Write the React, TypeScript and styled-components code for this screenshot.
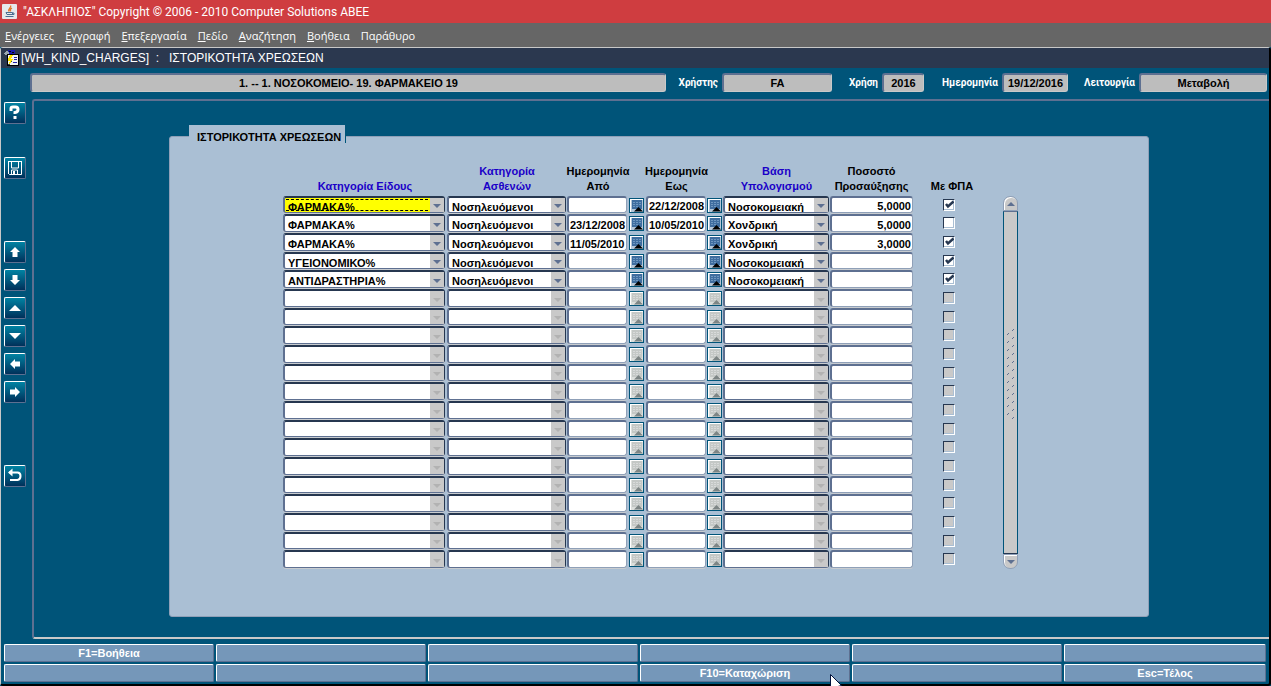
import React from "react";
import styled, { createGlobalStyle, css } from "styled-components";

const color = {
  teal: "#005479",
  panel: "#aabfd4",
  slate: "#5e7091",
  navy: "#263750",
  silver: "#c9c9c9",
  mist: "#8fa0b8",
  field: "#bdbdbd",
};

const GlobalStyle = createGlobalStyle`
  * { box-sizing: border-box; }
  body { margin: 0; background: ${color.teal}; overflow: hidden; }
  button, input, select { font: inherit; color: inherit; margin: 0; padding: 0; border-radius: 0; }
`;

const Shell = styled.div`
  min-height: 100vh;
  display: flex;
  flex-direction: column;
  font: bold 11px/15px "Liberation Sans", Arial, sans-serif;
  color: #000;
`;

const TitleBar = styled.header`
  display: flex;
  align-items: center;
  gap: 6px;
  height: 23px;
  padding-left: 2px;
  background: #cf3d40;
  color: #fff;
  font: 12px/16px Roboto, "Open Sans", sans-serif;
`;

const MenuBar = styled.nav`
  display: flex;
  align-items: center;
  gap: 11px;
  height: 24px;
  padding: 1px 0 0 5px;
  background: #666;
  color: #fff;
  font: 11px/16px "Open Sans", "Noto Sans", sans-serif;
`;

const MenuItem = styled.button`
  border: 0;
  background: none;
  white-space: nowrap;
`;

const Mdi = styled.main`
  flex: 1;
  display: flex;
  flex-direction: column;
  border: solid;
  border-width: 1px 2px 2px 1px;
  border-color: #c8c8c8 #000 #000 #c8c8c8;
  border-radius: 3px;
  background: ${color.teal};
`;

const MdiTitle = styled.h1`
  display: flex;
  align-items: center;
  gap: 2px;
  height: 20px;
  margin: 0;
  padding-left: 3px;
  background: #2b384f;
  color: #fff;
  font: 12px/16px "Liberation Sans", Arial, sans-serif;
  white-space: pre;
`;

const StatusBar = styled.div`
  display: grid;
  grid-template-columns: 1fr 56px 110px 50px 42px 78px 66px 71px 128px;
  align-items: center;
  padding: 5px 2px 0 29px;
`;

const StatusLabel = styled.label`
  padding-right: 4px;
  color: #fff;
  font-family: Roboto, "Liberation Sans", sans-serif;
  font-size: 10px;
  text-align: right;
  white-space: nowrap;
`;

const StatusField = styled.input`
  width: 100%;
  height: 19px;
  border: solid;
  border-width: 2px 1px 1px 2px;
  border-color: ${color.slate} ${color.silver} ${color.silver} ${color.slate};
  border-radius: 3px;
  background: ${color.field};
  text-align: center;
`;

const Workspace = styled.div`
  flex: 1;
  display: flex;
  margin-top: 7px;
`;

const ToolBar = styled.aside`
  flex: none;
  width: 31px;
  display: flex;
  flex-direction: column;
  gap: 33px;
  padding: 3px 0 0 3px;
`;

const ToolGroup = styled.div<{ $spaced?: boolean }>`
  display: flex;
  flex-direction: column;
  gap: 6px;
  margin-top: ${(p) => (p.$spaced ? 29 : 0)}px;
`;

const Tool = styled.button`
  display: flex;
  align-items: center;
  justify-content: center;
  width: 22px;
  height: 22px;
  border: 1px solid;
  border-color: #fff ${color.slate} ${color.slate} #fff;
  border-radius: 2px;
  background: linear-gradient(#0083a3, #00305a);
`;

const Frame = styled.div`
  flex: 1;
  border: solid;
  border-width: 2px 0 2px 2px;
  border-color: ${color.slate} transparent ${color.silver} ${color.slate};
  border-radius: 3px 0 0 3px;
  padding: 35px 120px 20px 135px;
  display: flex;
`;

const Panel = styled.section`
  position: relative;
  flex: 1;
  border: 1px solid ${color.mist};
  border-radius: 3px;
  background: ${color.panel};
  padding: 27px 0 47px 113px;
`;

const PanelTab = styled.h2`
  position: absolute;
  top: -12px;
  left: 19px;
  height: 18px;
  margin: 0;
  padding: 4px 4px 0 8px;
  border-right: 1px solid ${color.teal};
  background: ${color.panel};
  font: inherit;
  font-weight: bold;
  line-height: 17px;
`;

const Sheet = styled.form`
  display: flex;
  align-items: flex-end;
  gap: 12px;
`;

const Grid = styled.table`
  table-layout: fixed;
  width: 708px;
  border-collapse: collapse;
  td, th { padding: 0; }
`;

const HeadCell = styled.th<{ $lookup?: boolean }>`
  height: 32px;
  vertical-align: top;
  color: ${(p) => (p.$lookup ? "#1a00c8" : "#000")};
  span {
    display: flex;
    flex-direction: column;
    align-items: center;
    justify-content: flex-end;
    height: 30px;
    margin: 0 -8px;
    white-space: pre-line;
  }
`;

const Row = styled.tr`
  --cell: 18px;
  height: 19px;
  &:nth-child(3n + 1) {
    --cell: 17px;
    height: 18px;
  }
  td { vertical-align: top; line-height: 0; }
`;

const TextField = styled.input<{ $right?: boolean; $width: number }>`
  width: ${(p) => p.$width}px;
  height: var(--cell);
  padding: ${(p) => (p.$right ? "2px 1px 0 0" : "2px 0 0 1px")};
  border: solid;
  border-width: 2px 1px 1px 2px;
  border-color: ${color.slate} ${color.mist} ${color.mist} ${color.slate};
  border-radius: 3px;
  background: #fff;
  text-align: ${(p) => (p.$right ? "right" : "left")};
  box-shadow: 0 1px 0 #c8ccd0;
`;

const SelectBox = styled.div<{ $width: number }>`
  position: relative;
  width: ${(p) => p.$width}px;
  height: var(--cell);
`;

const Select = styled.select<{ $current?: boolean }>`
  appearance: none;
  width: 100%;
  height: 100%;
  padding: 2px 14px 0 3px;
  border: solid;
  border-width: 2px 1px 1px 2px;
  border-color: ${color.navy} ${color.navy} ${color.slate} ${color.slate};
  border-radius: 3px;
  background: #fff;
  box-shadow: 0 1px 0 #c8ccd0;
  line-height: 15px;
  outline: 0;
  ${(p) =>
    p.$current &&
    css`
      background: #ff0;
    `}
`;

const FocusRing = styled.i`
  position: absolute;
  inset: 3px 17px 2px 3px;
  border: dashed #000;
  border-width: 1px 0;
  pointer-events: none;
`;

const Arrow = styled.span<{ $off: boolean }>`
  position: absolute;
  top: 2px;
  right: 1px;
  bottom: 1px;
  width: 14px;
  display: flex;
  align-items: center;
  justify-content: center;
  padding-top: 2px;
  background: ${color.silver};
  color: ${(p) => (p.$off ? "#b2b2b2" : color.slate)};
  pointer-events: none;
`;

const DateButton = styled.button<{ $off: boolean }>`
  display: block;
  width: 15px;
  height: 15px;
  margin-top: 2px;
  border: 1px solid ${color.teal};
  background: ${(p) => (p.$off ? "#dcdfdc" : "#b4c6d8")};
  box-shadow: inset 1px 1px 0 #fff;
  svg { display: block; }
`;

const CheckCell = styled.td`
  && { padding-right: 7px; }
`;

const Tick = styled.label<{ $off: boolean }>`
  position: relative;
  display: block;
  width: 12px;
  height: 12px;
  margin: 3px auto 0;
  input {
    appearance: none;
    display: block;
    width: 12px;
    height: 12px;
    border: 1px solid;
    border-color: ${color.navy} #fff #fff ${color.navy};
    background: ${(p) => (p.$off ? color.silver : "#fff")};
    box-shadow: inset -1px -1px 0 ${color.panel};
  }
  svg {
    position: absolute;
    top: 1px;
    left: 2px;
    pointer-events: none;
  }
`;

const ScrollBar = styled.div`
  width: 15px;
  align-self: stretch;
  display: flex;
  flex-direction: column;
  margin-top: 32px;
`;

const ScrollButton = styled.button<{ $down?: boolean }>`
  display: flex;
  align-items: center;
  justify-content: center;
  height: 15px;
  border: 1px solid ${color.mist};
  border-radius: ${(p) => (p.$down ? "0 0 7px 7px" : "7px 7px 0 0")};
  background: ${color.silver};
  color: ${color.slate};
  box-shadow: inset 1px 1px 0 #fff;
`;

const Track = styled.div`
  flex: 1;
  display: flex;
  justify-content: center;
  border: 1px solid ${color.teal};
  border-color: ${color.slate} ${color.teal} ${color.navy};
  padding-top: 117px;
  background: ${color.silver};
`;

const KeyBar = styled.footer`
  display: grid;
  grid-template-columns: repeat(5, 105fr) 101fr;
  gap: 2px;
  padding: 5px 3px 2px;
`;

const KeyButton = styled.button`
  height: 18px;
  border: 1px solid;
  border-color: #fff ${color.slate} ${color.slate} #fff;
  border-radius: 2px;
  background: #7597b9;
  color: #fff;
`;

const Pointer = styled.svg`
  position: absolute;
  top: 674px;
  left: 830px;
`;

const JavaLogo = () => (
  <svg width="15" height="15" viewBox="0 0 15 15">
    <rect width="15" height="15" rx="1" fill="#e6e9ec" />
    <path d="M8.5 1.5C10 3.5 5.500 4.500 7 7.500M10 4C8 5 8 6 8.500 7.500" stroke="#e0782b" strokeWidth="1.300" fill="none" />
    <path d="M4 8.500h6.500v2H5zM3.500 12.500h8M10.500 9h1.500v1.500h-2" stroke="#4b6f91" fill="none" />
  </svg>
);

const FormLogo = () => (
  <svg width="15" height="16" viewBox="0 0 15 16" shapeRendering="crispEdges">
    <path d="M0 3l3-2 2 1v3H1z" fill="#9aa6b0" />
    <path d="M4 0h7v4H5z" fill="#1a1ab0" />
    <path d="M5 1h2v1H5zM8 2h2v1H8z" fill="#000" />
    <path d="M3 4h12v12H3z" fill="#000" />
    <path d="M4 5h10v10H4z" fill="#f4f4f4" />
    <path d="M10 7.500h3M10 9.500h3M9 12.500h4" stroke="#2424a8" />
    <path d="M8 5H6L4 9v2h2l-2 4h1l4-6H7l2-4z" fill="#ffe600" />
    <path d="M4 14.500h2M7 11.500h1" stroke="#444" fill="none" />
  </svg>
);

const toolShapes: Record<string, React.ReactNode> = {
  Βοήθεια: <path d="M5 7V4.500Q5 3 7 3h2.500Q12 3 12 5.500T9 8.500V10M9 12v3" stroke="#fff" strokeWidth="3" fill="none" />,
  Αποθήκευση: (
    <>
      <path d="M2.500 2.500h13v13h-12l-1-1zM5.500 3v6h7V3M5.500 15v-4h6v4M8 13v2" stroke="#fff" fill="none" />
      <path d="M2 2h1v13H2zM15 2h1v13h-1zM7 12h2v3H7z" fill="#fff" />
    </>
  ),
  Πρώτη: <path d="M9 4l5 5h-2.500v5h-5V9H4z" fill="#fff" />,
  Τελευταία: <path d="M9 14l5-5h-2.500V4h-5v5H4z" fill="#fff" />,
  Προηγούμενη: <path d="M9 6l6 6H3z" fill="#fff" />,
  Επόμενη: <path d="M9 12l6-6H3z" fill="#fff" />,
  Αριστερά: <path d="M4 9l5-5v2.500h5v5H9V14z" fill="#fff" />,
  Δεξιά: <path d="M14 9L9 4v2.500H4v5h5V14z" fill="#fff" />,
  Επιστροφή: (
    <>
      <path d="M3 5.500h8.500q3 0 3 3.500t-3 4H4" stroke="#fff" strokeWidth="2" fill="none" />
      <path d="M2 5.500L6.500 1.500v8z" fill="#fff" />
    </>
  ),
};

const ToolIcon = ({ name }: { name: string }) => (
  <Tool type="button" aria-label={name}>
    <svg width="18" height="18" viewBox="0 0 18 18">
      {toolShapes[name]}
    </svg>
  </Tool>
);

const Triangle = ({ up }: { up?: boolean }) => (
  <svg width="8" height="4" viewBox="0 0 8 4">
    <path d={up ? "M0 4h8L4 0z" : "M0 0h8L4 4z"} fill="currentColor" />
  </svg>
);

const Combo = ({ label, value, width, current }: { label: string; value?: string; width: number; current?: boolean }) => (
  <SelectBox $width={width}>
    <Select aria-label={label} defaultValue={value ?? ""} $current={current}>
      <option value={value ?? ""}>{value ?? ""}</option>
    </Select>
    {current && <FocusRing />}
    <Arrow $off={value === undefined}>
      <Triangle />
    </Arrow>
  </SelectBox>
);

const Calendar = ({ off }: { off: boolean }) => (
  <DateButton type="button" aria-label="Ημερολόγιο" $off={off}>
    <svg width="13" height="13" viewBox="0 0 13 13">
      <path d="M2 1h10v9H2z" fill={off ? "#c4c8c6" : "#3f6d9f"} />
      <path
        d="M3 3.500h2M6 3.500h2M9 3.500h2M3 5.500h2M6 5.500h2M9 5.500h2M3 7.500h2M6 7.500h2"
        stroke={off ? "#d8dada" : "#6f97c0"}
      />
      <path d="M4 12.500l4.500-4.500 4.500 4.500z" fill={off ? "#7d8585" : "#000"} />
    </svg>
  </DateButton>
);

type Charge = { kind: string; from?: string; to?: string; basis: string; pct?: string; vat: boolean };

const charges: Charge[] = [
  { kind: "ΦΑΡΜΑΚΑ%", to: "22/12/2008", basis: "Νοσοκομειακή", pct: "5,0000", vat: true },
  { kind: "ΦΑΡΜΑΚΑ%", from: "23/12/2008", to: "10/05/2010", basis: "Χονδρική", pct: "5,0000", vat: false },
  { kind: "ΦΑΡΜΑΚΑ%", from: "11/05/2010", basis: "Χονδρική", pct: "3,0000", vat: true },
  { kind: "ΥΓΕΙΟΝΟΜΙΚΟ%", basis: "Νοσοκομειακή", vat: true },
  { kind: "ΑΝΤΙΔΡΑΣΤΗΡΙΑ%", basis: "Νοσοκομειακή", vat: true },
];

const rows: (Charge | undefined)[] = Array.from({ length: 20 }, (_, i) => charges[i]);

const columns = [164, 120, 62, 17, 61, 16, 107, 83, 78];

const menus = ["Ενέργειες", "Εγγραφή", "Επεξεργασία", "Πεδίο", "Αναζήτηση", "Βοήθεια"];

const status = [
  ["Χρήστης", "FA"],
  ["Χρήση", "2016"],
  ["Ημερομηνία", "19/12/2016"],
  ["Λειτουργία", "Μεταβολή"],
];

const keys = ["F1=Βοήθεια", "", "", "", "", "", "", "", "", "F10=Καταχώριση", "", "Esc=Τέλος"];

const Head = ({ text, lookup }: { text: string; lookup?: boolean }) => (
  <HeadCell scope="col" $lookup={lookup}>
    <span>{text}</span>
  </HeadCell>
);

const ChargeRow = ({ charge, current }: { charge?: Charge; current: boolean }) => {
  const off = !charge;
  return (
    <Row>
      <td>
        <Combo label="Κατηγορία Είδους" width={162} value={charge?.kind} current={current} />
      </td>
      <td>
        <Combo label="Κατηγορία Ασθενών" width={119} value={charge && "Νοσηλευόμενοι"} />
      </td>
      <td>
        <TextField aria-label="Ημερομηνία Από" $width={60} defaultValue={charge?.from} />
      </td>
      <td>
        <Calendar off={off} />
      </td>
      <td>
        <TextField aria-label="Ημερομηνία Εως" $width={60} defaultValue={charge?.to} />
      </td>
      <td>
        <Calendar off={off} />
      </td>
      <td>
        <Combo label="Βάση Υπολογισμού" width={106} value={charge?.basis} />
      </td>
      <td>
        <TextField aria-label="Ποσοστό Προσαύξησης" $width={83} $right defaultValue={charge?.pct} />
      </td>
      <CheckCell>
        <Tick $off={off}>
          <input type="checkbox" aria-label="Με ΦΠΑ" disabled={off} defaultChecked={charge?.vat} />
          {charge?.vat && (
            <svg width="9" height="9" viewBox="0 0 9 9">
              <path d="M1 4l2 2.500L8.500 1.500" stroke={color.navy} strokeWidth="2.500" fill="none" />
            </svg>
          )}
        </Tick>
      </CheckCell>
    </Row>
  );
};

export default function App() {
  return (
    <Shell>
      <GlobalStyle />
      <TitleBar>
        <JavaLogo />
        <span>"ΑΣΚΛΗΠΙΟΣ" Copyright © 2006 - 2010 Computer Solutions ABEE</span>
      </TitleBar>
      <MenuBar>
        {menus.map((m) => (
          <MenuItem key={m}>
            <u>{m[0]}</u>
            {m.slice(1)}
          </MenuItem>
        ))}
        <MenuItem>Παράθυρο</MenuItem>
      </MenuBar>
      <Mdi>
        <MdiTitle>
          <FormLogo />
          {"[WH_KIND_CHARGES]  :   ΙΣΤΟΡΙΚΟΤΗΤΑ ΧΡΕΩΣΕΩΝ"}
        </MdiTitle>
        <StatusBar>
          <StatusField aria-label="Μονάδα" readOnly value="1. -- 1. ΝΟΣΟΚΟΜΕΙΟ- 19. ΦΑΡΜΑΚΕΙΟ 19" />
          {status.map(([label, value]) => (
            <React.Fragment key={label}>
              <StatusLabel htmlFor={label}>{label}</StatusLabel>
              <StatusField id={label} readOnly value={value} />
            </React.Fragment>
          ))}
        </StatusBar>
        <Workspace>
          <ToolBar>
            <ToolIcon name="Βοήθεια" />
            <ToolIcon name="Αποθήκευση" />
            <ToolGroup $spaced>
              {["Πρώτη", "Τελευταία", "Προηγούμενη", "Επόμενη", "Αριστερά", "Δεξιά"].map((n) => (
                <ToolIcon key={n} name={n} />
              ))}
            </ToolGroup>
            <ToolGroup $spaced>
              <ToolIcon name="Επιστροφή" />
            </ToolGroup>
          </ToolBar>
          <Frame>
            <Panel>
              <PanelTab>ΙΣΤΟΡΙΚΟΤΗΤΑ ΧΡΕΩΣΕΩΝ</PanelTab>
              <Sheet>
                <Grid>
                  <colgroup>
                    {columns.map((w, i) => (
                      <col key={i} width={w} />
                    ))}
                  </colgroup>
                  <thead>
                    <tr>
                      <Head lookup text="Κατηγορία Είδους" />
                      <Head lookup text={"Κατηγορία\nΑσθενών"} />
                      <Head text={"Ημερομηνία\nΑπό"} />
                      <td />
                      <Head text={"Ημερομηνία\nΕως"} />
                      <td />
                      <Head lookup text={"Βάση\nΥπολογισμού"} />
                      <Head text={"Ποσοστό\nΠροσαύξησης"} />
                      <Head text="Με ΦΠΑ" />
                    </tr>
                  </thead>
                  <tbody>
                    {rows.map((charge, i) => (
                      <ChargeRow key={i} charge={charge} current={i === 0} />
                    ))}
                  </tbody>
                </Grid>
                <ScrollBar>
                  <ScrollButton type="button" aria-label="Πάνω">
                    <Triangle up />
                  </ScrollButton>
                  <Track>
                    <svg width="7" height="92" viewBox="0 0 7 92">
                      {Array.from({ length: 12 }, (_, i) => (
                        <path
                          key={i}
                          d={`M5 ${i * 8 + 1.5}h1M6 ${i * 8 + 0.5}h1M0 ${i * 8 + 5.5}h1M1 ${i * 8 + 4.5}h1`}
                          stroke={color.slate}
                        />
                      ))}
                    </svg>
                  </Track>
                  <ScrollButton type="button" aria-label="Κάτω" $down>
                    <Triangle />
                  </ScrollButton>
                </ScrollBar>
              </Sheet>
            </Panel>
          </Frame>
        </Workspace>
        <KeyBar>
          {keys.map((k, i) => (
            <KeyButton key={i} type="button">
              {k}
            </KeyButton>
          ))}
        </KeyBar>
      </Mdi>
      <Pointer width="12" height="12" viewBox="0 0 12 12">
        <path d="M.5.500v14l11-3z" fill="#fff" stroke="#00103a" />
      </Pointer>
    </Shell>
  );
}
